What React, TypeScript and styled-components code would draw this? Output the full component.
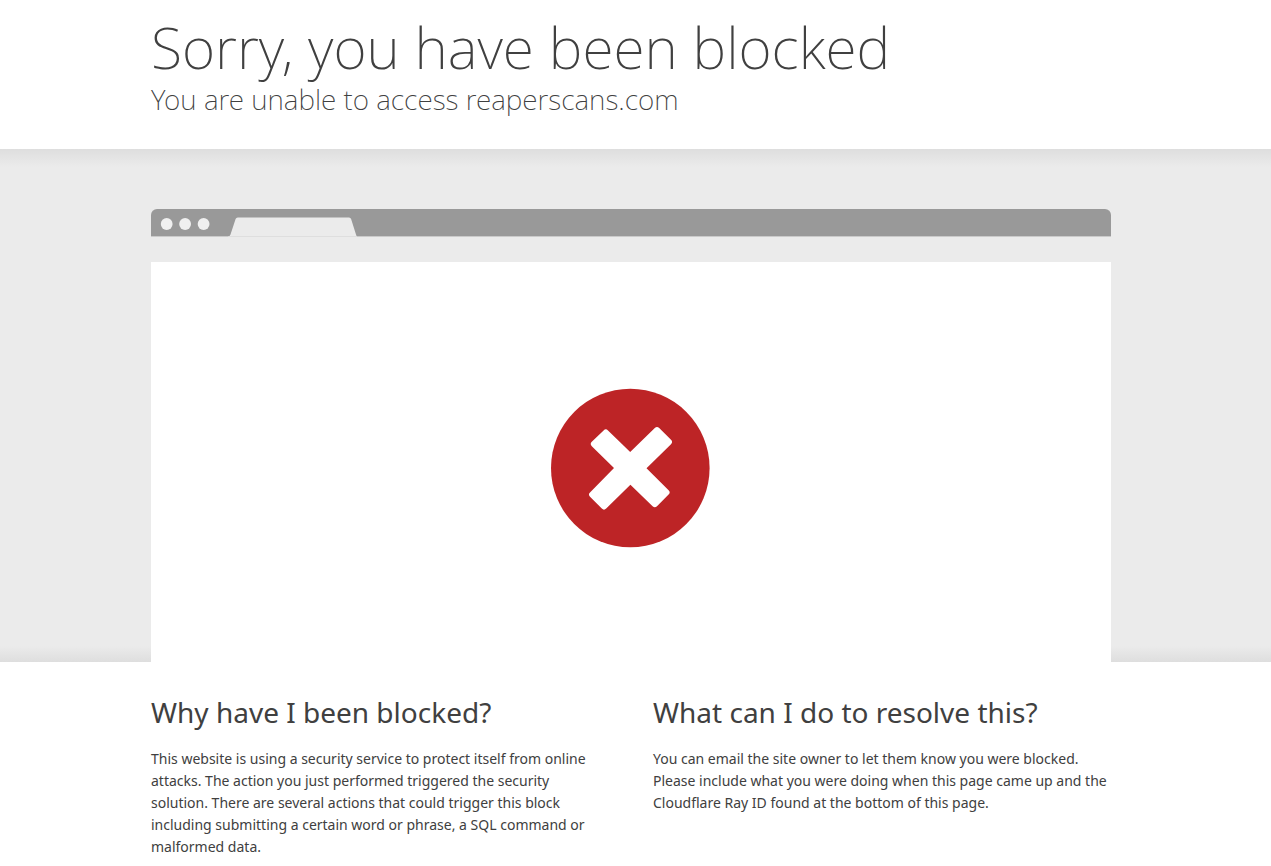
import React from "react";
import styled, { createGlobalStyle } from "styled-components";

const GlobalStyle = createGlobalStyle`
  *, *::before, *::after { box-sizing: border-box; }
  html, body { margin: 0; padding: 0; background: #fff; }
  body {
    color: #404040;
    font-family: "Segoe UI", "Noto Sans", "Open Sans", sans-serif;
    font-size: 14px;
    line-height: 22px;
  }
  h1, h2, p { margin: 0; }
`;

const Page = styled.div`
  overflow: hidden;
`;

const Wrapper = styled.div`
  width: calc(100% - 9px);
  padding: 0 16px;
`;

const Container = styled.div`
  max-width: 960px;
  margin: 0 auto;
`;

const Header = styled.header`
  width: calc(100% - 9px);
  padding: 11px 16px 33px;
`;

const Title = styled.h1`
  font-size: 57px;
  font-weight: 200;
  line-height: 72px;
`;

const Subtitle = styled.h2`
  font-size: 28px;
  font-weight: 200;
  line-height: 33px;
`;

const Band = styled.section`
  padding-top: 60px;
  background:
    linear-gradient(to bottom, #dedede, #ebebeb) top / 100% 18px no-repeat,
    linear-gradient(to top, #dedede, #ebebeb) bottom / 100% 16px no-repeat,
    #ebebeb;
`;

const BrowserBar = styled.div`
  display: flex;
  align-items: flex-start;
  height: 28px;
  padding: 8px 0 0 9px;
  border-bottom: 1px solid #cacaca;
  border-radius: 6px 6px 0 0;
  background: #999;
`;

const Controls = styled.svg`
  display: block;
  width: 51px;
  height: 14px;
`;

const Tab = styled.svg`
  display: block;
  width: 129px;
  height: 20px;
  margin-left: 17px;
`;

const Screen = styled.div`
  display: flex;
  justify-content: center;
  height: 400px;
  margin-top: 25px;
  padding-top: 126px;
  background: #fff;
`;

const ErrorIcon = styled.svg`
  width: 160px;
  height: 160px;
`;

const Columns = styled.div`
  display: grid;
  grid-template-columns: 1fr 1fr;
  gap: 44px;
  padding: 30px 0 8px;

  @media (max-width: 720px) {
    grid-template-columns: 1fr;
  }
`;

const ColumnTitle = styled.h2`
  margin-bottom: 16px;
  font-size: 28px;
  font-weight: 400;
  line-height: 40px;
`;

export default function App() {
  return (
    <Page>
      <GlobalStyle />
      <Header>
        <Container>
          <Title>Sorry, you have been blocked</Title>
          <Subtitle>You are unable to access reaperscans.com</Subtitle>
        </Container>
      </Header>
      <Band>
        <Wrapper>
          <Container>
            <BrowserBar>
              <Controls viewBox="0 0 51 14" fill="#f0f0f0" aria-hidden="true">
                <circle cx="6.7" cy="7" r="5.9" />
                <circle cx="25.1" cy="7" r="5.9" />
                <circle cx="43.6" cy="7" r="5.9" />
              </Controls>
              <Tab viewBox="0 0 129 20" aria-hidden="true">
                <path
                  d="M0.5 19.5 Q2 19 2.5 17.5 L7.6 2 Q8.1 .5 9.8 .5 H121 Q122.6 .5 123.1 2 L128 17.5 Q128.4 19 129 19.5 V20 H0Z"
                  fill="#ebebeb"
                />
                <path d="M1 19H129V20H1Z" fill="#dedede" />
              </Tab>
            </BrowserBar>
            <Screen>
              <ErrorIcon viewBox="0 0 160 160" role="img" aria-label="Blocked">
                <circle cx="79.3" cy="80" r="79.3" fill="#bd2426" />
                <path
                  d="M52.6 42.4 Q54.8 40.2 57 42.4 L79.2 64 L103.8 40 Q106 37.8 108.2 40 L120 51.8 Q122.2 54 120 56.2 L95.5 80.3 L117.6 102.2 Q119.8 104.4 117.6 106.6 L106 118.2 Q103.8 120.4 101.6 118.2 L79.4 96.8 L55.2 120.6 Q53 122.8 50.8 120.6 L39 108.8 Q36.8 106.6 39 104.4 L63 80 L40.8 58.2 Q38.6 56 40.8 53.8Z"
                  fill="#fff"
                />
              </ErrorIcon>
            </Screen>
          </Container>
        </Wrapper>
      </Band>
      <Wrapper>
        <Container>
          <Columns>
            <section>
              <ColumnTitle>Why have I been blocked?</ColumnTitle>
              <p>
                This website is using a security service to protect itself from online attacks. The
                action you just performed triggered the security solution. There are several actions
                that could trigger this block including submitting a certain word or phrase, a SQL
                command or malformed data.
              </p>
            </section>
            <section>
              <ColumnTitle>What can I do to resolve this?</ColumnTitle>
              <p>
                You can email the site owner to let them know you were blocked. Please include what
                you were doing when this page came up and the Cloudflare Ray ID found at the bottom
                of this page.
              </p>
            </section>
          </Columns>
        </Container>
      </Wrapper>
    </Page>
  );
}
